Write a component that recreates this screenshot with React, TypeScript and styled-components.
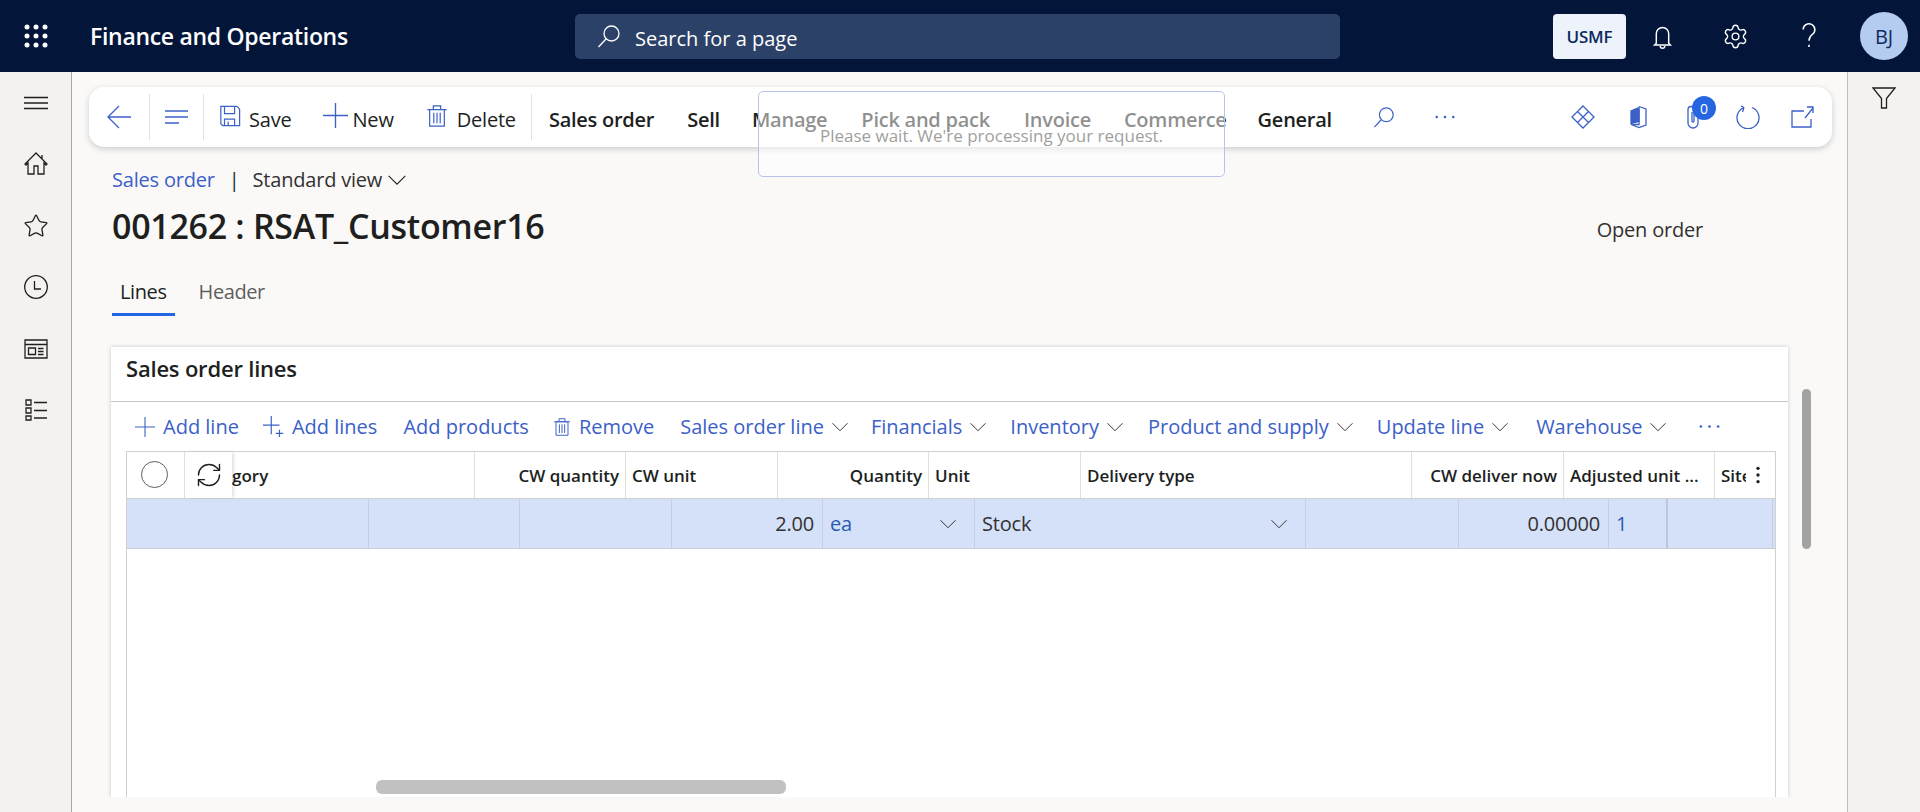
import React from 'react';
import styled, { createGlobalStyle } from 'styled-components';
import { RefreshCw, Settings, Star } from 'lucide-react';

const BLUE = '#3b60c8';
const INK = '#201f1e';

const GlobalStyle = createGlobalStyle`
  html, body {
    margin: 0;
    height: 100%;
    overflow: hidden;
    background: #faf9f8;
  }
  body {
    font-family: "Open Sans", "Noto Sans", "Liberation Sans", sans-serif;
    font-stretch: 88%;
    letter-spacing: -0.2px;
    color: ${INK};
  }
`;

const Shell = styled.div`
  position: relative;
  width: 1920px;
  height: 812px;
  display: flex;
  flex-direction: column;
  overflow: hidden;
`;

const TopBar = styled.header`
  height: 72px;
  flex: none;
  display: flex;
  align-items: center;
  background: #03163a;
  color: #fff;
`;

const Waffle = styled.div`
  width: 72px;
  display: flex;
  justify-content: center;
`;

const Brand = styled.div`
  width: 503px;
  padding-left: 18px;
  box-sizing: border-box;
  font-size: 23px;
  font-weight: 600;
  letter-spacing: -0.3px;
  white-space: nowrap;
`;

const SearchBox = styled.div`
  width: 765px;
  height: 45px;
  display: flex;
  align-items: center;
  gap: 14px;
  padding-left: 22px;
  box-sizing: border-box;
  border-radius: 5px;
  background: #2c4167;
  font-size: 20px;
  letter-spacing: 0;
`;

const SearchText = styled.span`
  padding-top: 5px;
`;

const TopRight = styled.div`
  display: flex;
  align-items: center;
  margin-left: 213px;
`;

const CompanyChip = styled.div`
  width: 73px;
  height: 45px;
  display: flex;
  align-items: center;
  justify-content: center;
  border-radius: 4px;
  background: #eef3fb;
  color: #0c2b5c;
  font-size: 17px;
  font-weight: 600;
`;

const TopSlot = styled.div`
  width: 73px;
  display: flex;
  justify-content: center;
`;

const Avatar = styled.div`
  width: 48px;
  height: 48px;
  margin-left: 15px;
  display: flex;
  align-items: center;
  justify-content: center;
  border-radius: 50%;
  background: #b5ccf1;
  color: #0c2b5c;
  font-size: 20px;
`;

const Body = styled.div`
  flex: 1;
  min-height: 0;
  display: flex;
`;

const NavRail = styled.nav`
  width: 72px;
  flex: none;
  display: flex;
  flex-direction: column;
  box-sizing: border-box;
  border-right: 1px solid #a8a6a4;
  background: #f3f2f1;
`;

const NavItem = styled.div`
  height: 61.5px;
  display: flex;
  align-items: center;
  justify-content: center;
`;

const Main = styled.main`
  flex: 1;
  min-width: 0;
  padding: 15px 15px 0 17px;
  background: #faf9f8;
`;

const FilterRail = styled.aside`
  width: 73px;
  flex: none;
  display: flex;
  justify-content: center;
  padding-top: 14px;
  box-sizing: border-box;
  border-left: 1px solid #c0bfbd;
  background: #f3f2f1;
`;

const ActionBar = styled.div`
  height: 60px;
  display: flex;
  align-items: center;
  border-radius: 15px;
  background: #fff;
  box-shadow: 0 2px 6px rgba(0, 0, 0, 0.18);
  font-size: 20px;
`;

const BarSlot = styled.div<{ $w: number }>`
  width: ${(p) => p.$w}px;
  flex: none;
  display: flex;
  justify-content: center;
  position: relative;
`;

const BarDivider = styled.div<{ $ml?: number }>`
  width: 1px;
  height: 46px;
  flex: none;
  margin-left: ${(p) => p.$ml ?? 0}px;
  background: #e3e1df;
`;

const BarAction = styled.div<{ $ml: number; $gap: number }>`
  display: flex;
  align-items: center;
  gap: ${(p) => p.$gap}px;
  margin-left: ${(p) => p.$ml}px;
  white-space: nowrap;
  line-height: 28px;
  & > span {
    padding-top: 5px;
  }
  & > svg {
    margin-top: -3px;
  }
`;

const BarMenu = styled.div<{ $x: number }>`
  margin-left: ${(p) => p.$x}px;
  padding-top: 4px;
  font-weight: 560;
  letter-spacing: -0.25px;
  white-space: nowrap;
`;

const BarEnd = styled.div`
  display: flex;
  align-items: center;
  margin-left: auto;
  padding-right: 2px;
`;

const CountBadge = styled.span`
  position: absolute;
  top: -9px;
  left: 27px;
  width: 24px;
  height: 24px;
  display: flex;
  align-items: center;
  justify-content: center;
  border-radius: 50%;
  background: #2566e0;
  color: #fff;
  font-size: 14px;
`;

const WaitNotice = styled.div`
  position: absolute;
  left: 758px;
  top: 91px;
  width: 467px;
  height: 86px;
  box-sizing: border-box;
  padding-top: 31px;
  border: 1px solid #b6c4ea;
  border-radius: 5px;
  background: rgba(255, 255, 255, 0.5);
  color: #a19f9d;
  font-size: 17px;
  letter-spacing: 0;
  line-height: 26px;
  text-align: center;
  white-space: nowrap;
`;

const PageHead = styled.div`
  display: flex;
  align-items: flex-end;
  justify-content: space-between;
  padding: 19px 129px 0 23px;
`;

const Breadcrumb = styled.div`
  display: flex;
  align-items: center;
  font-size: 20px;
  line-height: 28px;
  white-space: nowrap;
`;

const CrumbLink = styled.span`
  color: ${BLUE};
`;

const CrumbBar = styled.span`
  margin: 0 13px 0 14px;
`;

const CrumbView = styled.span`
  margin-right: 5px;
  color: #323130;
`;

const PageTitle = styled.h1`
  margin: 9px 0 1px;
  font-size: 34px;
  font-weight: 600;
  letter-spacing: -0.3px;
  line-height: 46px;
  white-space: nowrap;
`;

const OpenOrder = styled.div`
  margin-bottom: -3px;
  font-size: 20px;
  line-height: 46px;
  color: #323130;
`;

const Tabs = styled.div`
  display: flex;
  gap: 16px;
  margin: 20px 0 0 23px;
`;

const Tab = styled.div<{ $active?: boolean }>`
  height: 46px;
  padding: 0 8px;
  box-sizing: border-box;
  display: flex;
  align-items: center;
  border-bottom: 3px solid ${(p) => (p.$active ? '#2266e3' : 'transparent')};
  color: ${(p) => (p.$active ? INK : '#605e5c')};
  font-size: 20px;
  letter-spacing: -0.4px;
`;

const Card = styled.section`
  width: 1677px;
  height: 450px;
  margin: 31px 0 0 22px;
  display: flex;
  flex-direction: column;
  background: #fff;
  box-shadow: 0 0 4px rgba(0, 0, 0, 0.2);
  clip-path: inset(-6px -6px 0 -6px);
`;

const CardTitle = styled.h2`
  height: 55px;
  flex: none;
  margin: 0;
  padding: 0 0 13px 15px;
  box-sizing: border-box;
  display: flex;
  align-items: center;
  border-bottom: 1px solid #c8c6c4;
  font-size: 22px;
  font-weight: 600;
`;

const LineBar = styled.div`
  height: 49px;
  flex: none;
  display: flex;
  align-items: center;
  color: ${BLUE};
  font-size: 20px;
  letter-spacing: 0;
  white-space: nowrap;
`;

const LineAction = styled.div<{ $x: number; $gap?: number }>`
  display: flex;
  align-items: center;
  gap: ${(p) => p.$gap ?? 7}px;
  margin-left: ${(p) => p.$x}px;
`;

const Grid = styled.div`
  flex: 1;
  width: 1650px;
  margin-left: 15px;
  box-sizing: border-box;
  border: 1px solid #d2d0ce;
  border-bottom: 0;
`;

const HeaderRow = styled.div`
  height: 46px;
  display: flex;
  border-bottom: 1px solid #d2d0ce;
  font-size: 17px;
  font-weight: 600;
  letter-spacing: 0;
`;

const HeadCell = styled.div<{ $w: number; $right?: boolean; $flush?: boolean }>`
  width: ${(p) => p.$w}px;
  flex: none;
  box-sizing: border-box;
  display: flex;
  align-items: center;
  justify-content: ${(p) => (p.$right ? 'flex-end' : 'flex-start')};
  padding: 0 6px 0 ${(p) => (p.$flush ? 0 : 6)}px;
  overflow: hidden;
  white-space: nowrap;
  border-right: 1px solid #e1dfdd;
`;

const SelectCell = styled(HeadCell)`
  justify-content: center;
  padding: 0 3px 0 0;
`;

const RadioRing = styled.div`
  width: 27px;
  height: 27px;
  margin-top: -2px;
  box-sizing: border-box;
  border: 1px solid #605e5c;
  border-radius: 50%;
`;

const RefreshCell = styled(HeadCell)`
  justify-content: center;
  padding: 0;
  box-shadow: 3px 0 3px -1px rgba(0, 0, 0, 0.12);
  position: relative;
  border-right: 0;
`;

const ColumnMenu = styled.div`
  position: absolute;
  right: 6px;
  top: 50%;
  transform: translateY(-50%);
  display: flex;
`;

const SiteCell = styled(HeadCell)`
  position: relative;
  border-right: 0;
`;

const SiteClip = styled.span`
  width: 25px;
  overflow: hidden;
`;

const DataRow = styled.div`
  height: 50px;
  display: flex;
  box-sizing: border-box;
  border-bottom: 1px solid #c8ccd4;
  background: #d4e1f9;
  color: #323130;
  font-size: 20px;
`;

const DataCell = styled.div<{ $w: number; $right?: boolean; $link?: boolean; $heavy?: boolean }>`
  width: ${(p) => p.$w}px;
  flex: none;
  box-sizing: border-box;
  display: flex;
  align-items: center;
  justify-content: ${(p) => (p.$right ? 'flex-end' : 'space-between')};
  padding: 0 ${(p) => (p.$right ? 8 : 17)}px 0 7px;
  border-right: ${(p) => (p.$heavy ? '2px solid #bcc6d8' : '1px solid #c3cee4')};
  color: ${(p) => (p.$link ? '#2b5bb0' : 'inherit')};
`;

const PageScroll = styled.div`
  position: absolute;
  left: 1802px;
  top: 389px;
  width: 9px;
  height: 160px;
  border-radius: 5px;
  background: #a3a3a3;
`;

const GridScroll = styled.div`
  position: absolute;
  left: 376px;
  top: 780px;
  width: 410px;
  height: 14px;
  border-radius: 6px;
  background: #c1c1c1;
`;

const Glyph = styled.svg.attrs({ viewBox: '0 0 24 24', fill: 'none' })<{ $size?: number; $color?: string; $sw?: number }>`
  width: ${(p) => p.$size ?? 24}px;
  height: ${(p) => p.$size ?? 24}px;
  flex: none;
  display: block;
  color: ${(p) => p.$color ?? 'inherit'};
  stroke: currentColor;
  stroke-width: ${(p) => p.$sw ?? 1.3};
`;

type IconProps = { size?: number; color?: string; sw?: number };

const icon = (body: React.ReactNode) =>
  function DrawnIcon({ size, color, sw }: IconProps) {
    return (
      <Glyph $size={size} $color={color} $sw={sw}>
        {body}
      </Glyph>
    );
  };

const WaffleIcon = icon(
  <g fill="currentColor" stroke="none">
    {[3, 12, 21].map((y) =>
      [3, 12, 21].map((x) => <circle key={`${x}-${y}`} cx={x} cy={y} r="2.5" />),
    )}
  </g>,
);
const SearchIcon = icon(<path d="M14.5 2a7.5 7.5 0 1 1 0 15 7.5 7.5 0 0 1 0-15zM9 15L1.5 23" />);
const BellIcon = icon(
  <path d="M6.5 18V9.5a5.5 5.5 0 0 1 11 0V18l1.5 1.5H5zM10 20.5a2 2 0 0 0 4 0" />,
);
const HelpIcon = icon(<path d="M7 6.5a5 5 0 1 1 8 4c-2 1.5-3 2.7-3 5.5M12 19.5v2" />);
const MenuIcon = icon(<path d="M0 6.5h24M0 12h24M0 17.5h24" />);
const HomeIcon = icon(
  <path d="M12 1L1 12l1 1 2-2v11h6v-8h4v8h6V11l2 2 1-1zM18 3v4" />,
);
const ClockIcon = icon(
  <path d="M12 .7a11.3 11.3 0 1 1 0 22.6 11.3 11.3 0 0 1 0-22.6zM10.5 6v8H17" />,
);
const WorkspaceIcon = icon(
  <path d="M1 3h22v18H1zM1 7.5h22M4.5 11h7v6.5h-7zM14 11.5h5.5M14 14.5h5.5M14 17.5h5.5" />,
);
const ListIcon = icon(
  <path d="M2 2h5v5H2zM2 10h5v5H2zM2 18h5v4H2zM10 4.5h13M10 12.5h13M10 20h13" />,
);
const FilterIcon = icon(<path d="M1 2h22l-8.5 10.5V22h-5v-9.5z" />);
const BackIcon = icon(<path d="M1 12h23M12 1L1 12l11 11" />);
const LinesIcon = icon(<path d="M0 6h23M0 12h23M0 18h14" />);
const SaveIcon = icon(
  <path d="M2 1.5h17.5L22.5 4.5v18H4l-2-2zM6 1.5v8h11v-8M6 22.5v-7h11v7M10 18v4.5" />,
);
const PlusIcon = icon(<path d="M12 0v24M0 12h24" />);
const TrashIcon = icon(
  <path d="M4 5h16v18H4zM1.5 5h21M8 5V1h8v4M8.5 8.5V20M12 8.5V20M15.5 8.5V20" />,
);
const DotsIcon = icon(
  <g fill="currentColor" stroke="none">
    <circle cx="3" cy="12" r="1.4" />
    <circle cx="12" cy="12" r="1.4" />
    <circle cx="21" cy="12" r="1.4" />
  </g>,
);
const DiamondIcon = icon(
  <path d="M12 1l11 11-11 11L1 12zM6.5 6.5l11 11M17.5 6.5l-11 11" />,
);
const OfficeIcon = icon(
  <>
    <path d="M13 1.5l7 2.5v16l-7 2.5-8-3h8V4" />
    <path d="M13 2.5L5 6v12.5l8-2z" fill="currentColor" />
  </>,
);
const ClipIcon = icon(<path d="M17 7v11a5 5 0 0 1-10 0V4.5a3 3 0 0 1 6 0V16a1 1 0 0 1-2 0V7" />);
const RedoIcon = icon(
  <path d="M8 2.5A11 11 0 1 0 16 2.5M8 2.5L5 1M8 2.5L6.5 7" />,
);
const OpenIcon = icon(<path d="M13 6H1v16h19v-8M14 13l8-10M16 2h6v6" />);
const ChevronIcon = icon(<path d="M2 7l10 10L22 7" />);
const AddLinesIcon = icon(<path d="M9 0v20M0 10h18M18 15v8M14 19h8" />);
const KebabIcon = icon(
  <g fill="currentColor" stroke="none">
    <circle cx="12" cy="4" r="2" />
    <circle cx="12" cy="12" r="2" />
    <circle cx="12" cy="20" r="2" />
  </g>,
);

const menus = [
  { label: 'Sales order', x: 17 },
  { label: 'Sell', x: 33 },
  { label: 'Manage', x: 32 },
  { label: 'Pick and pack', x: 34 },
  { label: 'Invoice', x: 34 },
  { label: 'Commerce', x: 33 },
  { label: 'General', x: 31 },
];

const lineMenus = [
  { label: 'Sales order line', x: 26 },
  { label: 'Financials', x: 22 },
  { label: 'Inventory', x: 23 },
  { label: 'Product and supply', x: 24 },
  { label: 'Update line', x: 23 },
  { label: 'Warehouse', x: 27 },
];

const rowCells = [
  { w: 242 },
  { w: 151 },
  { w: 152 },
  { w: 151, text: '2.00', right: true },
  { w: 152, text: 'ea', link: true, drop: true },
  { w: 331, text: 'Stock', drop: true },
  { w: 153 },
  { w: 150, text: '0.00000', right: true },
  { w: 59, text: '1', link: true, heavy: true },
  { w: 105 },
];

export default function App() {
  return (
    <Shell>
      <GlobalStyle />
      <TopBar>
        <Waffle>
          <WaffleIcon />
        </Waffle>
        <Brand>Finance and Operations</Brand>
        <SearchBox>
          <SearchIcon />
          <SearchText>Search for a page</SearchText>
        </SearchBox>
        <TopRight>
          <CompanyChip>USMF</CompanyChip>
          <TopSlot>
            <BellIcon size={27} />
          </TopSlot>
          <TopSlot>
            <Settings size={27} strokeWidth={1.2} />
          </TopSlot>
          <TopSlot>
            <HelpIcon size={28} />
          </TopSlot>
          <Avatar>BJ</Avatar>
        </TopRight>
      </TopBar>
      <Body>
        <NavRail>
          <NavItem>
            <MenuIcon />
          </NavItem>
          <NavItem>
            <HomeIcon />
          </NavItem>
          <NavItem>
            <Star size={26} strokeWidth={1.2} />
          </NavItem>
          <NavItem>
            <ClockIcon />
          </NavItem>
          <NavItem>
            <WorkspaceIcon />
          </NavItem>
          <NavItem>
            <ListIcon />
          </NavItem>
        </NavRail>
        <Main>
          <ActionBar>
            <BarSlot $w={60}>
              <BackIcon color={BLUE} />
            </BarSlot>
            <BarDivider />
            <BarSlot $w={53}>
              <LinesIcon color={BLUE} />
            </BarSlot>
            <BarDivider />
            <BarAction $ml={15} $gap={8}>
              <SaveIcon size={22} color={BLUE} />
              <span>Save</span>
            </BarAction>
            <BarAction $ml={31} $gap={5}>
              <PlusIcon size={25} color={BLUE} />
              <span>New</span>
            </BarAction>
            <BarAction $ml={32} $gap={9}>
              <TrashIcon size={22} color={BLUE} />
              <span>Delete</span>
            </BarAction>
            <BarDivider $ml={15} />
            {menus.map((m) => (
              <BarMenu key={m.label} $x={m.x}>
                {m.label}
              </BarMenu>
            ))}
            <BarSlot $w={105}>
              <SearchIcon size={22} color={BLUE} />
            </BarSlot>
            <BarSlot $w={16}>
              <DotsIcon size={22} color={BLUE} />
            </BarSlot>
            <BarEnd>
              <BarSlot $w={55}>
                <DiamondIcon color={BLUE} />
              </BarSlot>
              <BarSlot $w={55}>
                <OfficeIcon color={BLUE} />
              </BarSlot>
              <BarSlot $w={55}>
                <ClipIcon color={BLUE} />
                <CountBadge>0</CountBadge>
              </BarSlot>
              <BarSlot $w={55}>
                <RedoIcon color={BLUE} />
              </BarSlot>
              <BarSlot $w={55}>
                <OpenIcon color={BLUE} />
              </BarSlot>
            </BarEnd>
          </ActionBar>
          <PageHead>
            <div>
              <Breadcrumb>
                <CrumbLink>Sales order</CrumbLink>
                <CrumbBar>|</CrumbBar>
                <CrumbView>Standard view</CrumbView>
                <ChevronIcon size={20} />
              </Breadcrumb>
              <PageTitle>001262 : RSAT_Customer16</PageTitle>
            </div>
            <OpenOrder>Open order</OpenOrder>
          </PageHead>
          <Tabs>
            <Tab $active>Lines</Tab>
            <Tab>Header</Tab>
          </Tabs>
          <Card>
            <CardTitle>Sales order lines</CardTitle>
            <LineBar>
              <LineAction $x={24} $gap={8}>
                <PlusIcon size={20} />
                Add line
              </LineAction>
              <LineAction $x={24} $gap={7}>
                <AddLinesIcon size={22} />
                Add lines
              </LineAction>
              <LineAction $x={26}>Add products</LineAction>
              <LineAction $x={24} $gap={8}>
                <TrashIcon size={18} />
                Remove
              </LineAction>
              {lineMenus.map((m) => (
                <LineAction key={m.label} $x={m.x}>
                  {m.label}
                  <ChevronIcon size={18} color="#323130" />
                </LineAction>
              ))}
              <LineAction $x={31}>
                <DotsIcon size={23} />
              </LineAction>
            </LineBar>
            <Grid>
              <HeaderRow>
                <SelectCell $w={58}>
                  <RadioRing />
                </SelectCell>
                <RefreshCell $w={47}>
                  <RefreshCw size={28} strokeWidth={1.2} />
                </RefreshCell>
                <HeadCell $w={243} $flush>
                  gory
                </HeadCell>
                <HeadCell $w={151} $right>
                  CW quantity
                </HeadCell>
                <HeadCell $w={152}>CW unit</HeadCell>
                <HeadCell $w={151} $right>
                  Quantity
                </HeadCell>
                <HeadCell $w={152}>Unit</HeadCell>
                <HeadCell $w={331}>Delivery type</HeadCell>
                <HeadCell $w={152} $right>
                  CW deliver now
                </HeadCell>
                <HeadCell $w={151}>Adjusted unit ...</HeadCell>
                <SiteCell $w={59}>
                  <SiteClip>Site</SiteClip>
                  <ColumnMenu>
                    <KebabIcon size={20} />
                  </ColumnMenu>
                </SiteCell>
              </HeaderRow>
              <DataRow>
                {rowCells.map((c, i) => (
                  <DataCell key={i} $w={c.w} $right={c.right} $link={c.link} $heavy={c.heavy}>
                    {c.text}
                    {c.drop && <ChevronIcon size={18} color="#323130" />}
                  </DataCell>
                ))}
              </DataRow>
            </Grid>
          </Card>
        </Main>
        <FilterRail>
          <FilterIcon />
        </FilterRail>
      </Body>
      <WaitNotice>Please wait. We're processing your request.</WaitNotice>
      <PageScroll />
      <GridScroll />
    </Shell>
  );
}
